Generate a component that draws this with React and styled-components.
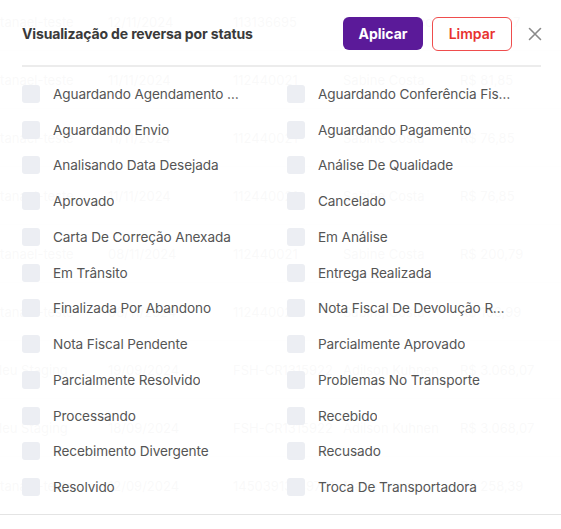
import React from 'react'
import styled, { createGlobalStyle } from 'styled-components'

const GlobalStyle = createGlobalStyle`
  html, body {
    margin: 0;
    padding: 0;
    background: #ffffff;
  }
  body {
    font-family: Inter, "Noto Sans", sans-serif;
    overflow: hidden;
  }
`

const statuses = [
  'Aguardando Agendamento Coleta',
  'Aguardando Conferência Fiscal',
  'Aguardando Envio',
  'Aguardando Pagamento',
  'Analisando Data Desejada',
  'Análise De Qualidade',
  'Aprovado',
  'Cancelado',
  'Carta De Correção Anexada',
  'Em Análise',
  'Em Trânsito',
  'Entrega Realizada',
  'Finalizada Por Abandono',
  'Nota Fiscal De Devolução Recusada',
  'Nota Fiscal Pendente',
  'Parcialmente Aprovado',
  'Parcialmente Resolvido',
  'Problemas No Transporte',
  'Processando',
  'Recebido',
  'Recebimento Divergente',
  'Recusado',
  'Resolvido',
  'Troca De Transportadora',
]

// faint table behind the overlay
const rows = [
  ['Natanael-teste', '12/11/2024', '113136695', 'Raissa M.Pecci', 'R$ 135,27'],
  ['Natanael-teste', '11/11/2024', '112440021', 'Sabine Costa', 'R$ 81,85'],
  ['Natanael-teste', '11/11/2024', '112440021', 'Sabine Costa', 'R$ 76,85'],
  ['Natanael-teste', '11/11/2024', '112440021', 'Sabine Costa', 'R$ 76,85'],
  ['Natanael-teste', '08/11/2024', '112440021', 'Sabine Costa', 'R$ 200,79'],
  ['Natanael-teste', '08/11/2024', '112440021', 'Sabine Costa', 'R$ 106,99'],
  ['Gilleu Staging', '19/09/2024', 'FSH-CR1315922', 'Adilson Kuhnen', 'R$ 3.068,07'],
  ['Gilleu Staging', '18/09/2024', 'FSH-CR1315922', 'Adilson Kuhnen', 'R$ 3.068,07'],
  ['Natanael-teste', '12/09/2024', '14503913149721', 'Maria Souza', 'R$ 258,39'],
]

export default function App() {
  return (
    <>
      <GlobalStyle />
      <Page>
        <Table aria-hidden="true">
          {rows.map((r, i) => (
            <TableRow key={i}>
              {r.map((c, j) => (
                <Cell key={j}>{c}</Cell>
              ))}
            </TableRow>
          ))}
        </Table>

        <Panel>
          <Header>
            <Title>Visualização de reversa por status</Title>
            <Actions>
              <PrimaryButton>Aplicar</PrimaryButton>
              <OutlineButton>Limpar</OutlineButton>
              <CloseButton aria-label="Fechar">
                <svg width="14" height="14" viewBox="0 0 14 14">
                  <path
                    d="M1.5 1.5 L12.5 12.5 M12.5 1.5 L1.5 12.5"
                    stroke="#8a8a8a"
                    strokeWidth="1.6"
                    strokeLinecap="round"
                  />
                </svg>
              </CloseButton>
            </Actions>
          </Header>
          <Divider />
          <Grid>
            {statuses.map((s) => (
              <Option key={s}>
                <Box />
                <Label>{s}</Label>
              </Option>
            ))}
          </Grid>
        </Panel>
      </Page>
    </>
  )
}

const Page = styled.div`
  position: relative;
  width: 561px;
  height: 529px;
  overflow: hidden;
`

const Table = styled.div`
  margin-top: -7px;
  margin-left: -17px;
`

const TableRow = styled.div`
  display: grid;
  grid-template-columns: 125px 125px 110px 117px 120px;
  align-items: center;
  height: 57px;
  border-bottom: 1px solid #e4e4e4;
`

const Cell = styled.div`
  font-size: 13px;
  color: #888;
  white-space: nowrap;
`

const Panel = styled.div`
  position: absolute;
  inset: 0 0 20px 0;
  background: rgba(255, 255, 255, 0.95);
  padding: 17px 20px 0 22px;
`

const Header = styled.div`
  display: flex;
  align-items: center;
  justify-content: space-between;
  height: 33px;
`

const Title = styled.h2`
  margin: 0;
  font-size: 14px;
  font-weight: 700;
  letter-spacing: -0.15px;
  color: #3a3a3a;
`

const Actions = styled.div`
  display: flex;
  align-items: center;
  gap: 9px;
  margin-right: -6px;
`

const PrimaryButton = styled.button`
  width: 80px;
  height: 33px;
  border: none;
  border-radius: 6px;
  background: #5b1a99;
  color: #fff;
  font-family: inherit;
  font-size: 14px;
  font-weight: 700;
`

const OutlineButton = styled.button`
  width: 80px;
  height: 34px;
  border: 1px solid #ef4d4d;
  border-radius: 6px;
  background: #fff;
  color: #e8322f;
  font-family: inherit;
  font-size: 14px;
  font-weight: 600;
`

const CloseButton = styled.button`
  display: flex;
  align-items: center;
  justify-content: center;
  width: 24px;
  height: 24px;
  margin-left: 2px;
  padding: 0;
  border: none;
  background: none;
`

const Divider = styled.hr`
  margin: 15px 0 0 0;
  border: none;
  border-top: 2px solid #ececec;
`

const Grid = styled.div`
  display: grid;
  grid-template-columns: 265px 1fr;
  grid-auto-rows: 35.75px;
  align-items: center;
  padding-top: 9px;
`

const Option = styled.label`
  display: flex;
  align-items: center;
  gap: 13px;
`

const Box = styled.span`
  flex: none;
  width: 18px;
  height: 18px;
  border-radius: 3px;
  background: #eceef3;
`

const Label = styled.span`
  max-width: 194px;
  overflow: hidden;
  text-overflow: ellipsis;
  white-space: nowrap;
  font-size: 13.6px;
  letter-spacing: -0.1px;
  color: #555;
`
